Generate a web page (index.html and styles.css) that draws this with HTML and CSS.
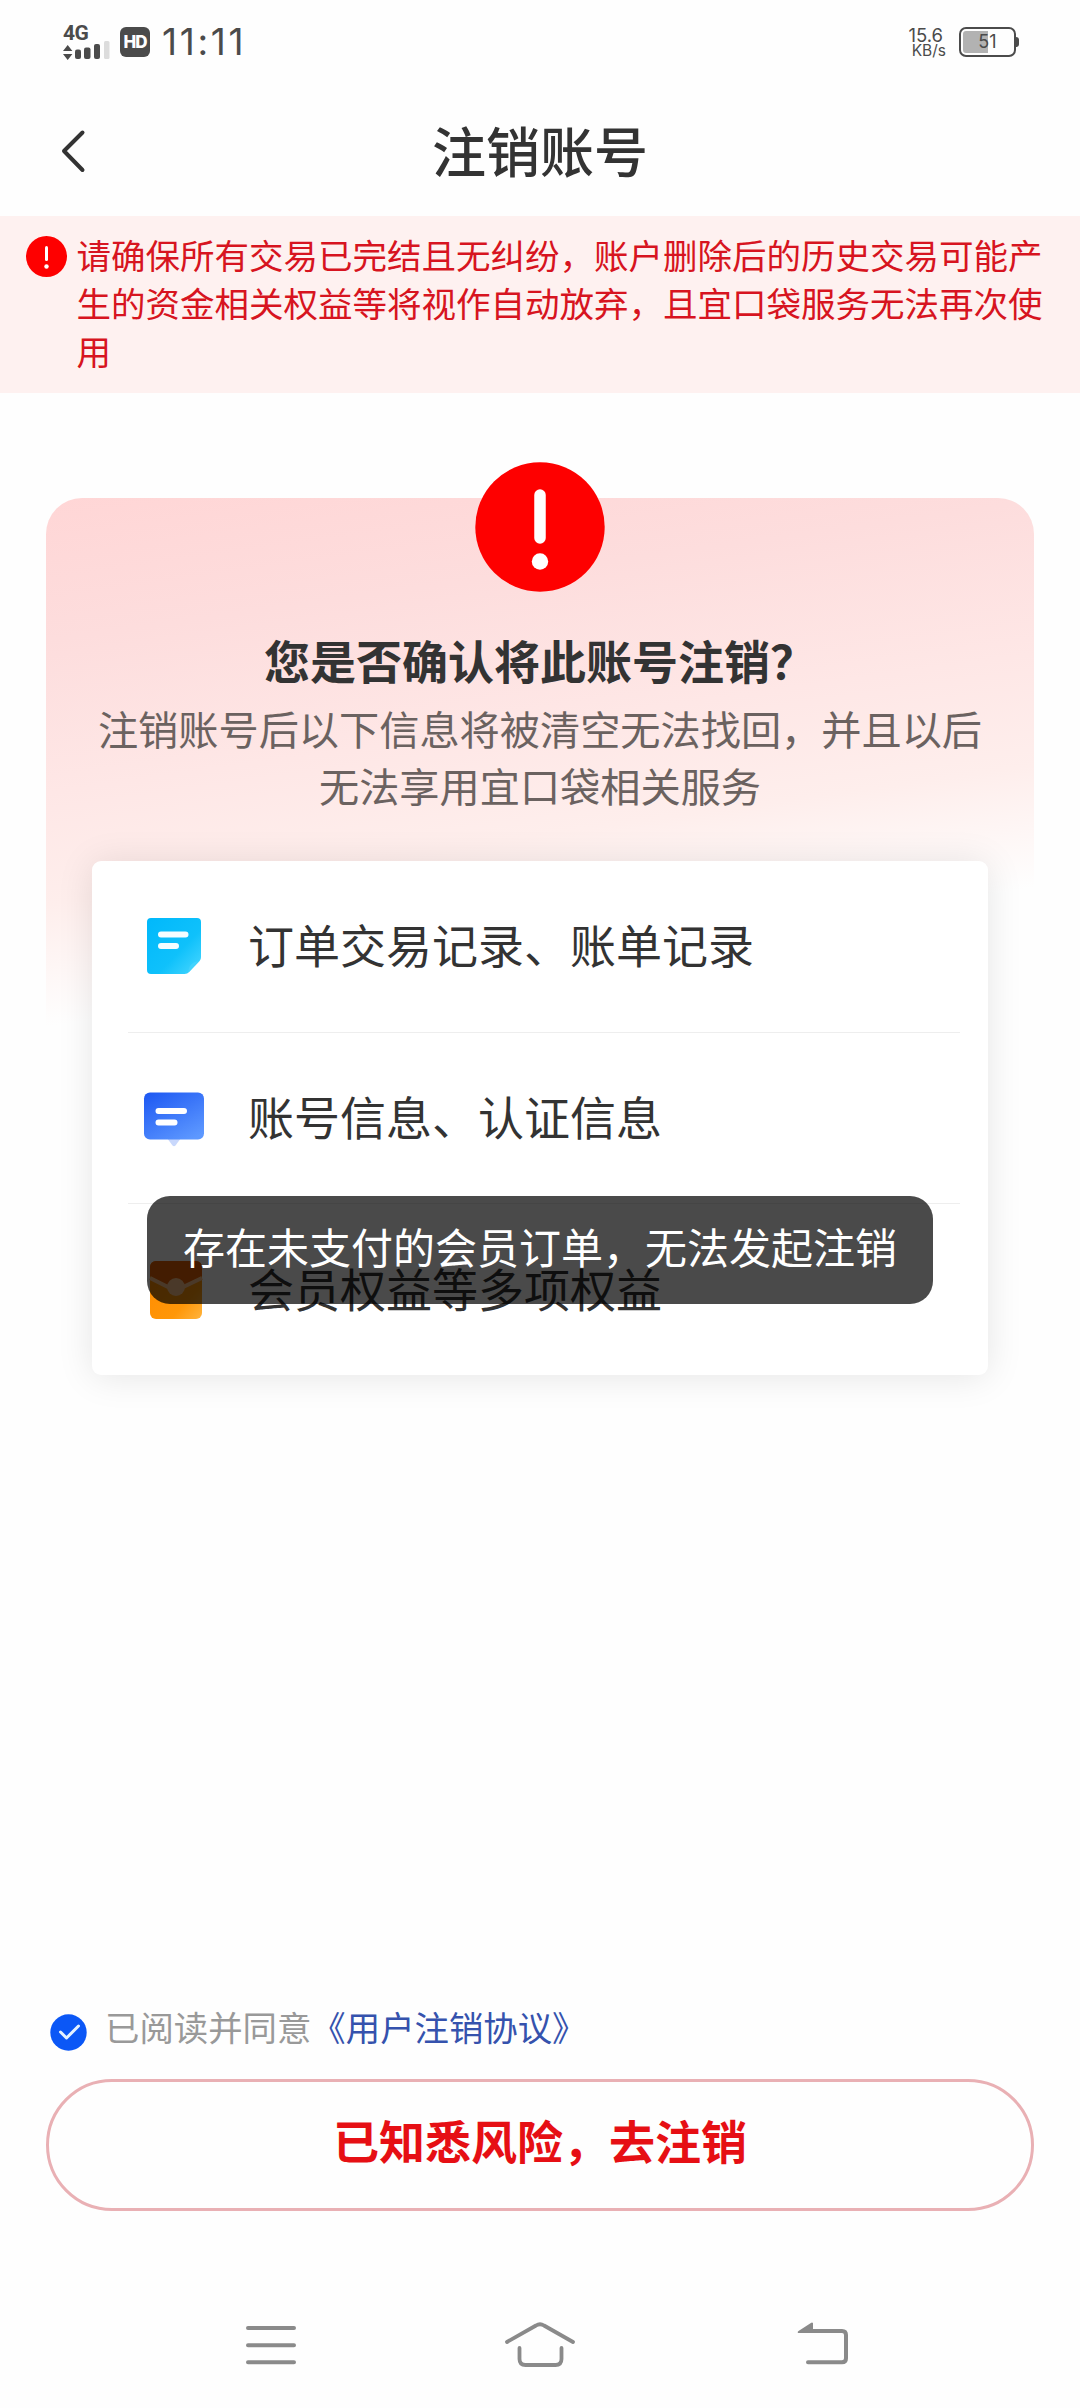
FILE: index.html
```html
<!DOCTYPE html>
<html lang="zh-CN">
<head>
<meta charset="utf-8">
<title>注销账号</title>
<link rel="stylesheet" href="styles.css">
</head>
<body>
<div class="screen">
  <div class="status">
    <div class="network">
      <span class="network-type">4G</span>
      <svg class="signal" width="47" height="16" viewBox="0 0 47 16">
        <path d="M0 7 4.700 1 9.400 7ZM0 10h9.400L4.700 16Z" fill="#4b4b4b"/>
        <g fill="#4b4b4b"><rect x="12" y="5.500" width="6" height="9.500" rx="2"/><rect x="21" y="3.500" width="6.500" height="11.500" rx="2"/><rect x="31" y="0" width="6" height="15" rx="2"/></g>
        <rect x="41" y="-3" width="5.500" height="18" rx="1.500" fill="#dcdcdc"/>
      </svg>
    </div>
    <span class="hd">HD</span>
    <span class="time">11:11</span>
    <div class="speed"><span class="speed-value">15.6</span><span class="speed-unit">KB/s</span></div>
    <div class="battery"><span class="battery-text">51</span></div>
  </div>

  <header class="header">
    <svg class="back" width="28" height="46" viewBox="0 0 28 46"><path d="M24.500 4.500 6 23 24.500 42" fill="none" stroke="#333" stroke-width="4" stroke-linecap="round" stroke-linejoin="round"/></svg>
    <h1 class="title">注销账号</h1>
  </header>

  <div class="notice">
    <svg class="notice-icon" width="41" height="41" viewBox="0 0 41 41"><circle cx="20.500" cy="20.500" r="20.500" fill="#fe0000"/><path d="M20.500 11.500v12" stroke="#fff" stroke-width="3" stroke-linecap="round"/><circle cx="20.500" cy="30.500" r="2.200" fill="#fff"/></svg>
    <p class="notice-text">请确保所有交易已完结且无纠纷，账户删除后的历史交易可能产<br>生的资金相关权益等将视作自动放弃，且宜口袋服务无法再次使<br>用</p>
  </div>

  <main class="panel">
    <svg class="alert" width="130" height="130" viewBox="0 0 130 130"><circle cx="65" cy="65" r="64.700" fill="#fe0000"/><path d="M65 33v43" stroke="#fff" stroke-width="11.500" stroke-linecap="round"/><circle cx="65" cy="99.500" r="8.200" fill="#fff"/></svg>
    <h2 class="question">您是否确认将此账号注销？</h2>
    <p class="description">注销账号后以下信息将被清空无法找回，并且以后<br>无法享用宜口袋相关服务</p>
    <div class="items">
      <div class="item">
        <svg class="item-icon" width="64" height="64" viewBox="0 0 64 64">
          <defs><linearGradient id="cyan" x1="0" y1="0" x2="1" y2="1"><stop offset="0" stop-color="#00b8fb"/><stop offset=".6" stop-color="#0fc1fb"/><stop offset="1" stop-color="#4bd8ff"/></linearGradient></defs>
          <path d="M9 4h46a4 4 0 0 1 4 4v35c0 2-1 3.500-2 4.500L47 58c-1 1-2.500 2-4.500 2H9a4 4 0 0 1-4-4V8a4 4 0 0 1 4-4Z" fill="url(#cyan)"/>
          <path d="M57.500 47 46.500 58.500c-.5-5 3-11 11-11.500Z" fill="#42d3fd"/>
          <path d="M19 20.500h24.500M19 32h15" stroke="#f4fdff" stroke-width="6" stroke-linecap="round"/>
        </svg>
        <span>订单交易记录、账单记录</span>
      </div>
      <div class="item">
        <svg class="item-icon" width="64" height="64" viewBox="0 0 64 64">
          <defs><linearGradient id="blue" x1=".1" y1="0" x2=".8" y2="1"><stop offset="0" stop-color="#1f5af3"/><stop offset="1" stop-color="#5d98ff"/></linearGradient></defs>
          <path d="M25 52h14l-5.500 7.500q-1.500 1.500-3 0Z" fill="#c9d8fc"/>
          <rect x="2" y="6.500" width="60" height="47" rx="6" fill="url(#blue)"/>
          <path d="M16.500 25h25.500M16.500 36.500h16" stroke="#fff" stroke-width="6" stroke-linecap="round"/>
        </svg>
        <span>账号信息、认证信息</span>
      </div>
      <div class="item">
        <svg class="item-icon" width="64" height="64" viewBox="0 0 64 64">
          <defs><linearGradient id="orange" x1="0" y1="0" x2="1" y2="1"><stop offset="0" stop-color="#ff8a00"/><stop offset=".7" stop-color="#ff9708"/><stop offset="1" stop-color="#ffb43e"/></linearGradient></defs>
          <rect x="8" y="3" width="52" height="58" rx="6" fill="url(#orange)"/>
          <path d="M8 18V9a6 6 0 0 1 6-6h40a6 6 0 0 1 6 6v9L39 29H28Z" fill="#e76004"/>
          <path d="m8 20 20 10h11l21-10" fill="none" stroke="#ffc58d" stroke-width="4"/>
          <circle cx="34" cy="29" r="9" fill="#ffc58d"/>
        </svg>
        <span>会员权益等多项权益</span>
      </div>
      <div class="toast">存在未支付的会员订单，无法发起注销</div>
    </div>
  </main>

  <footer class="actions">
    <div class="agreement">
      <svg width="37" height="37" viewBox="0 0 37 37"><circle cx="18.500" cy="18.500" r="18.200" fill="#0b57f6"/><path d="m10.500 18 6 6 12-12" fill="none" stroke="#e5f2ff" stroke-width="3" stroke-linecap="round" stroke-linejoin="round"/></svg>
      <span class="agreement-text">已阅读并同意<a class="link">《用户注销协议》</a></span>
    </div>
    <button class="confirm">已知悉风险，去注销</button>
  </footer>

  <nav class="nav">
    <svg width="80" height="50" viewBox="0 0 80 50"><path d="M17 8h46M17 25.200h46M17 42.300h46" stroke="#8a8a8a" stroke-width="4" stroke-linecap="round"/></svg>
    <svg class="home" width="80" height="50" viewBox="0 0 80 50"><path d="M7 22 36 5.500q4-2.500 8 0L73 22M19.500 28v11q0 6 6 6h30q6 0 6-6V28" fill="none" stroke="#8a8a8a" stroke-width="3.800" stroke-linecap="round"/></svg>
    <svg width="80" height="50" viewBox="0 0 80 50"><path d="M23 11h27q6 0 6 0 4 0 4 4v23.300q0 4-4 4H22" fill="none" stroke="#8a8a8a" stroke-width="4" stroke-linecap="round"/><path d="M12 13h15V3q-1-1-2.500.3L12.500 11q-1.500 1-.5 2Z" fill="#8a8a8a"/></svg>
  </nav>
</div>
</body>
</html>
```
FILE: styles.css
```css
* { box-sizing: border-box; }

body {
  margin: 0;
  background: #fefefe;
  color: #333;
  font-family: "Noto Sans CJK SC", sans-serif;
}

h1, h2, p { margin: 0; }
svg { display: block; flex: none; overflow: visible; }

.screen {
  position: relative;
  display: flex;
  flex-direction: column;
  width: 1080px;
  height: 2408px;
  overflow: hidden;
}

.status {
  display: flex;
  align-items: center;
  height: 84px;
  padding: 0 60px 0 63px;
  color: #4b4b4b;
  font-family: Inter, sans-serif;
}

.network {
  display: flex;
  flex-direction: column;
  width: 57px;
  gap: 3px;
}

.network-type {
  font: 700 21px/16px Roboto, sans-serif;
  letter-spacing: -0.500px;
}

.hd {
  width: 30px;
  height: 30px;
  border-radius: 6px;
  background: #4b4b4b;
  color: #fff;
  font-size: 17px;
  font-weight: 800;
  letter-spacing: -1px;
  line-height: 30px;
  text-align: center;
}

.time {
  margin-left: 12px;
  font-size: 37px;
  line-height: 40px;
  letter-spacing: 2.700px;
}

.speed {
  display: flex;
  flex-direction: column;
  align-items: flex-end;
  margin-left: auto;
  margin-right: 13px;
}

.speed-value {
  margin-right: 3px;
  font-size: 18.500px;
  line-height: 16px;
}

.speed-unit {
  font-size: 15.500px;
  line-height: 15px;
}

.battery {
  position: relative;
  width: 57px;
  height: 30px;
  margin-right: 4px;
  padding: 2px;
  border: 2.500px solid #4b4b4b;
  border-radius: 7px;
  background: linear-gradient(90deg, #b2b2b2 51%, transparent 51%) content-box;
  text-align: center;
}

.battery::after {
  content: "";
  position: absolute;
  top: 8px;
  right: -5px;
  width: 3px;
  height: 10px;
  border-radius: 0 3px 3px 0;
  background: #4b4b4b;
}

.battery-text {
  display: block;
  font-size: 18px;
  line-height: 22px;
}

.header {
  display: grid;
  grid-template-columns: 60px 1fr 60px;
  align-items: center;
  height: 132px;
  padding: 0 58px;
}

.back { margin-top: 2px; }

.title {
  font-size: 54px;
  font-weight: 500;
  line-height: 70px;
  text-align: center;
}

.notice {
  display: flex;
  gap: 10px;
  height: 177px;
  padding: 14px 0 0 25.500px;
  background: #fef1f0;
}

.notice-icon { margin-top: 6px; }

.notice-text {
  color: #d71420;
  font-size: 34.500px;
  line-height: 48px;
  white-space: nowrap;
}

.panel {
  display: flex;
  flex-direction: column;
  align-items: center;
  height: 878px;
  margin: 105px 46px 0;
  border-radius: 36px 36px 0 0;
  background: linear-gradient(172deg, #ffd6d6 0%, #fddddd 14%, #fee7e6 29%, #feeeec 40%, rgba(254, 254, 254, 0) 52%);
}

.alert { margin-top: -36px; }

.question {
  margin-top: 34px;
  font-size: 46px;
  font-weight: 700;
  line-height: 66px;
}

.description {
  margin-top: 7px;
  color: #6b6260;
  font-size: 40.200px;
  line-height: 57px;
  text-align: center;
  white-space: nowrap;
}

.items {
  position: relative;
  width: 896px;
  height: 514px;
  margin-top: 48px;
  padding: 0 28px 0 36px;
  border-radius: 9px;
  background: #fff;
  box-shadow: 0 2px 36px rgba(0, 0, 0, .1);
}

.item {
  display: flex;
  align-items: center;
  gap: 42px;
  height: 171.500px;
  padding-left: 14px;
  border-bottom: 1px solid #eee;
  font-size: 46px;
  line-height: 66px;
}

.item:nth-child(3) { border-bottom: 0; }
.item span { margin-top: -6px; }

.toast {
  position: absolute;
  top: 335px;
  left: 55px;
  width: 786px;
  height: 108px;
  border-radius: 23px;
  background: rgba(0, 0, 0, .71);
  color: #fff;
  font-size: 42px;
  line-height: 100px;
  text-align: center;
}

.actions {
  margin-top: auto;
  padding: 0 46px;
}

.agreement {
  display: flex;
  align-items: center;
  gap: 18px;
  height: 60px;
  padding-left: 4px;
}

.agreement-text {
  margin-top: -12px;
  color: #999;
  font-size: 34.400px;
  line-height: 48px;
}

.link { color: #3552ad; }

.confirm {
  display: block;
  width: 100%;
  height: 132px;
  margin-top: 17px;
  padding: 0 0 12px;
  border: 3px solid #e9b0b4;
  border-radius: 66px;
  background: #fefefe;
  color: #e60f14;
  font: 700 46px/66px "Noto Sans CJK SC", sans-serif;
}

.nav {
  display: flex;
  justify-content: space-between;
  height: 88px;
  margin-top: 109px;
  padding: 0 214px 0 231px;
}

.home { margin-right: 17px; }
```
